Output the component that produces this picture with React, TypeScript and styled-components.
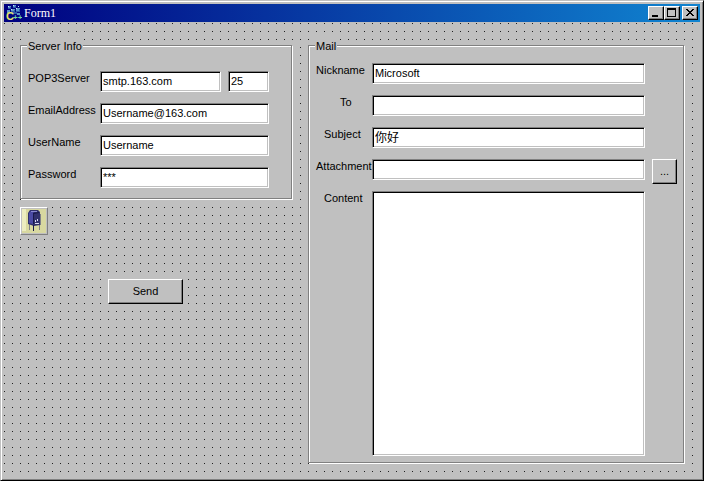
import React from "react";
import styled, { createGlobalStyle, css } from "styled-components";

const GlobalStyle = createGlobalStyle`
  * { box-sizing: border-box; }
  body {
    margin: 0;
    background: #c0c0c0;
    color: #000;
    font: 11px/14px "Liberation Sans", "Noto Sans CJK SC", sans-serif;
  }
  input, button, textarea { font: inherit; color: inherit; }
`;

const raised = css`
  border: 1px solid;
  border-color: #fff #000 #000 #fff;
  box-shadow: inset -1px -1px #808080;
  background: #c0c0c0;
`;

const sunken = css`
  border: 1px solid;
  border-color: #808080 #fff #fff #808080;
  box-shadow: inset 1px 1px #000, inset -1px -1px #c0c0c0;
  background: #fff;
  border-radius: 0;
  outline: none;
`;

const WindowFrame = styled.main`
  display: flex;
  flex-direction: column;
  min-height: 100vh;
  padding: 3px;
  background: #c0c0c0;
  border: 1px solid;
  border-color: #c0c0c0 #000 #000 #c0c0c0;
  box-shadow: inset 1px 1px #fff, inset -1px -1px #808080;
`;

const TitleBar = styled.header`
  display: flex;
  align-items: center;
  height: 18px;
  margin-bottom: 1px;
  padding: 0 2px;
  background: linear-gradient(90deg, #000080, #1084d0);
  color: #fff;
`;

const Title = styled.h1`
  flex: 1;
  margin: 0 0 0 2px;
  font: 12px/16px "Liberation Serif", serif;
`;

const CaptionButton = styled.button<{ $apart?: boolean }>`
  ${raised}
  display: flex;
  align-items: center;
  justify-content: center;
  width: 16px;
  height: 14px;
  padding: 0;
  margin-left: ${(p) => (p.$apart ? "2px" : "0")};
`;

const Client = styled.form`
  flex: 1;
  display: grid;
  grid-template-columns: 272px minmax(0, 1fr);
  align-items: start;
  gap: 16px;
  padding: 16px 16px 14px;
  background-image: linear-gradient(90deg, transparent 1px, #c0c0c0 1px),
    linear-gradient(#202020 1px, #c0c0c0 1px);
  background-size: 8px 8px;
`;

const SideColumn = styled.div`
  display: flex;
  flex-direction: column;
  align-items: flex-start;
  gap: 8px;
`;

const GroupBox = styled.fieldset<{ $wide?: boolean }>`
  width: 100%;
  min-width: 0;
  margin: 0;
  padding: ${(p) => (p.$wide ? "11px 6px 6px 7px" : "19px 22px 10px 7px")};
  border: 1px solid #808080;
  box-shadow: 1px 1px #fff, inset 1px 1px #fff;
  background: #c0c0c0;
`;

const Caption = styled.legend`
  height: 13px;
  padding: 0 1px;
  margin-left: -1px;
  line-height: 14px;
  background: #c0c0c0;
`;

const Fields = styled.div<{ $labelWidth: number; $aside?: boolean }>`
  display: grid;
  grid-template-columns: ${(p) => p.$labelWidth}px minmax(0, 1fr) ${(p) => (p.$aside ? "32px" : "")};
  align-items: start;
  row-gap: 11px;
`;

const FieldLabel = styled.label<{ $indent?: number }>`
  grid-column: 1;
  padding-left: ${(p) => p.$indent ?? 0}px;
  white-space: nowrap;
`;

const Pair = styled.div`
  display: grid;
  grid-template-columns: minmax(0, 1fr) 41px;
  gap: 7px;
`;

const TextBox = styled.input`
  ${sunken}
  width: 100%;
  height: 21px;
  padding: 0 2px 2px;

  &:lang(zh) { font-size: 12px; }
`;

const Memo = styled.textarea`
  ${sunken}
  display: block;
  width: 100%;
  height: 265px;
  padding: 2px;
  resize: none;
`;

const PushButton = styled.button`
  ${raised}
  width: 75px;
  height: 25px;
  padding: 0 0 2px;
`;

const BrowseButton = styled(PushButton)`
  width: 25px;
  height: 25px;
  margin: 0 0 -4px 7px;
`;

const SendRow = styled.div`
  padding: 36px 0 0 88px;
`;

const ComponentTile = styled.div`
  ${raised}
  width: 28px;
  height: 28px;
  border-color: #fff #808080 #808080 #fff;
  box-shadow: none;
  padding: 1px;
`;

const AppIcon = () => (
  <svg width="16" height="16" viewBox="0 0 16 16" shapeRendering="crispEdges" aria-hidden="true">
    <path fill="#5c94cc" d="M2 1h3v3H2zM7 0h3v3H7zM10 3h4v4h-4zM5 4h4v3H5zM1 5h3v3H1zM11 8h3v2h-3z" />
    <path fill="#2c5ca8" d="M4 2h1v2H2V3h2zM9 1h1v2H7V2h2zM13 4h1v3h-4V6h3zM8 5h1v3H5V6h3zM3 7h8v2H3z" />
    <path fill="#c8e4f8" d="M2 1h1v1H2zM7 0h1v1H7zM10 3h1v1h-1zM5 4h1v1H5zM12 1h1v1h-1z" />
    <text x="0" y="15" fill="#e4e468" fontFamily="Liberation Sans" fontWeight="bold" fontSize="11">C</text>
    <text x="7" y="15" fill="#70d8a0" fontFamily="Liberation Sans" fontWeight="bold" fontSize="8">++</text>
  </svg>
);

const MailboxIcon = () => (
  <svg width="24" height="24" viewBox="0 0 24 24" aria-label="Mail component" role="img" display="block">
    <path fill="#d8d8a0" d="M0 0h24v24H0z" />
    <path fill="#ececc0" d="M0 0h4v22H0z" />
    <path fill="#808088" d="M7 15h1v6H7zM17 15h1v6h-1zM18 5h1v11h-1z" />
    <path fill="#30306c" d="M6 4l2-3h8l2 2v13l-6 1-6-2z" />
    <path fill="#4a4aa4" d="M7 4l2-2h4l-2 2v11l-4-1z" />
    <path fill="#18184c" d="M11 4l6-1v1l-5 1v10h-1zM11 16h1v6h-1z" />
    <path fill="#d8d8f0" d="M13 11h1v2h-1zM15 10h1v2h-1zM13 14h4v1h-4z" />
    <path fill="#8888d0" d="M9 2h6v1H9z" />
  </svg>
);

const TextField = ({
  id, label, value, indent, lang,
}: { id: string; label: string; value: string; indent?: number; lang?: string }) => (
  <>
    <FieldLabel htmlFor={id} $indent={indent}>{label}</FieldLabel>
    <TextBox id={id} defaultValue={value} lang={lang} autoComplete="off" spellCheck={false} />
  </>
);

export default function App() {
  return (
    <>
      <GlobalStyle />
      <WindowFrame>
        <TitleBar>
          <AppIcon />
          <Title>Form1</Title>
          <CaptionButton type="button" aria-label="Minimize">
            <svg width="12" height="10" shapeRendering="crispEdges"><path d="M2 7h6v2H2z" /></svg>
          </CaptionButton>
          <CaptionButton type="button" aria-label="Maximize">
            <svg width="12" height="10" shapeRendering="crispEdges">
              <path fillRule="evenodd" d="M1 0h9v9H1zM2 2v6h7V2z" />
            </svg>
          </CaptionButton>
          <CaptionButton type="button" aria-label="Close" $apart>
            <svg width="12" height="10" shapeRendering="crispEdges">
              <path d="M2 1h2v1h1v1h2V2h1V1h2v1H9v1H8v1H7v1h1v1h1v1h1v1H8V7H7V6H5v1H4v1H2V7h1V6h1V5h1V4H4V3H3V2H2z" />
            </svg>
          </CaptionButton>
        </TitleBar>

        <Client onSubmit={(e) => e.preventDefault()}>
          <SideColumn>
            <GroupBox>
              <Caption>Server Info</Caption>
              <Fields $labelWidth={72}>
                <FieldLabel htmlFor="server">POP3Server</FieldLabel>
                <Pair>
                  <TextBox id="server" defaultValue="smtp.163.com" spellCheck={false} />
                  <TextBox aria-label="Port" defaultValue="25" />
                </Pair>
                <TextField id="email" label="EmailAddress" value="Username@163.com" />
                <TextField id="user" label="UserName" value="Username" />
                <TextField id="password" label="Password" value="***" />
              </Fields>
            </GroupBox>
            <ComponentTile><MailboxIcon /></ComponentTile>
            <SendRow><PushButton type="submit">Send</PushButton></SendRow>
          </SideColumn>

          <GroupBox $wide>
            <Caption>Mail</Caption>
            <Fields $labelWidth={56} $aside>
              <TextField id="nickname" label="Nickname" value="Microsoft" />
              <TextField id="to" label="To" value="" indent={24} />
              <TextField id="subject" label="Subject" value="你好" indent={8} lang="zh-CN" />
              <TextField id="attachment" label="Attachment" value="" />
              <BrowseButton type="button" aria-label="Browse for attachment">...</BrowseButton>
              <FieldLabel htmlFor="content" $indent={8}>Content</FieldLabel>
              <Memo id="content" />
            </Fields>
          </GroupBox>
        </Client>
      </WindowFrame>
    </>
  );
}
